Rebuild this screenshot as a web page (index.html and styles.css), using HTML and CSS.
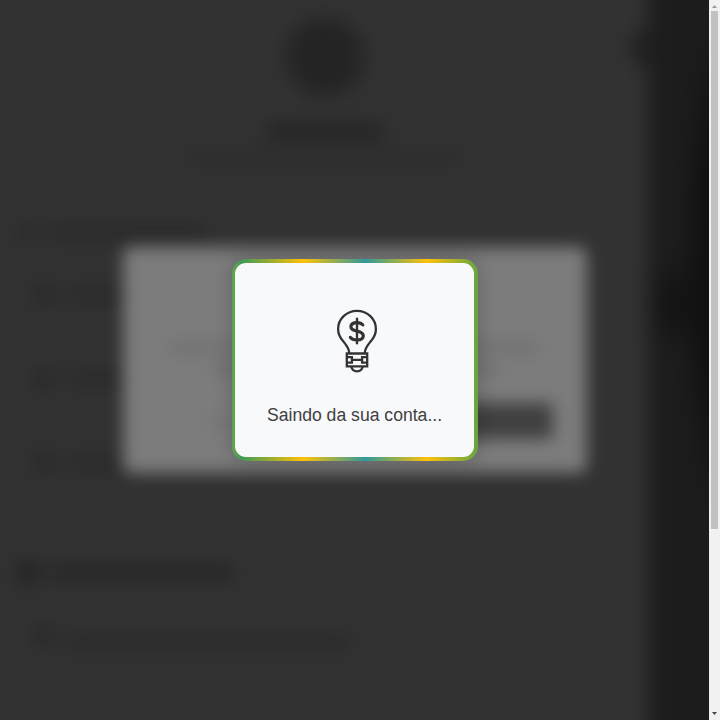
FILE: index.html
```
<!DOCTYPE html>
<html lang="pt-BR">
<head>
<meta charset="utf-8">
<title>Saindo da sua conta</title>
<link rel="stylesheet" href="styles.css">
</head>
<body>
<main class="viewport">
  <div class="backdrop" aria-hidden="true">
    <div class="sheet">
      <i class="avatar"></i>
      <i class="bar name"></i>
      <i class="bar email"></i>
      <i class="divider first"></i>
      <div class="heading"><i class="dot"></i><i class="bar"></i></div>
      <div class="row"><i class="dot"></i><i class="bar"></i></div>
      <div class="row"><i class="dot"></i><i class="bar"></i></div>
      <div class="row"><i class="dot"></i><i class="bar"></i></div>
      <i class="divider second"></i>
      <div class="heading security"><i class="dot"></i><i class="bar"></i></div>
      <div class="row wide"><i class="dot"></i><i class="bar"></i></div>
    </div>
    <div class="side"></div>
    <i class="close"></i>
  </div>
  <div class="dialog" aria-hidden="true">
    <i class="line"></i>
    <i class="line short"></i>
    <div class="actions"><i class="cancel"></i><i class="confirm"></i></div>
  </div>
  <section class="card" role="status">
    <div class="card-body">
      <svg class="bulb" width="42" height="66" viewBox="0 0 42 66" fill="none" stroke="#333" stroke-width="2.3">
        <path d="M13.3 44C13 39 10.3 36 7.2 32.2C3.9 28.4 2.1 25 2.1 20.2A18.9 18.4 0 0 1 39.9 20.2C39.9 25 38.1 28.4 34.8 32.2C31.7 36 29 39 28.7 44"/>
        <path d="M21 9.8V34.2" stroke-width="2.4" stroke-linecap="round"/>
        <path d="M26.8 15.9C25.6 14.3 23.6 13.6 21 13.6C17.1 13.6 14.9 15.2 14.9 17.7C14.9 20.7 17.6 21.3 21 22.1C24.6 22.9 27.3 23.8 27.3 26.8C27.3 29.5 25 31 21 31C17.9 31 15.5 30 14.4 28.4" stroke-width="3.2" stroke-linecap="round"/>
        <path d="M10.8 44.5H31.2V57.4H10.8ZM11 48.2H15.9V53.6H11M31 48.2H26.1V53.6H31M16 50.9H26"/>
        <path d="M15.2 57.6C16 60.9 18 62.4 21 62.4C24 62.4 26 60.9 26.8 57.6"/>
      </svg>
      <p class="message">Saindo da sua conta...</p>
    </div>
  </section>
</main>
<div class="scrollbar" aria-hidden="true"><i class="arrow up"></i><i class="thumb"></i><i class="arrow down"></i></div>
</body>
</html>
```
FILE: styles.css
```
* { box-sizing: border-box; }
body {
  margin: 0;
  display: flex;
  width: 720px;
  height: 720px;
  overflow: hidden;
  background: #1b1b1b;
  font-family: "Liberation Sans", Arial, sans-serif;
}
i { display: block; flex: none; }

.viewport {
  position: relative;
  width: 709px;
  height: 720px;
  overflow: hidden;
  display: flex;
  align-items: center;
  justify-content: center;
}

.backdrop {
  position: absolute;
  inset: -30px;
  display: flex;
  filter: blur(10px);
  background: #323232;
}
.sheet {
  width: 678px;
  padding: 47px 28px 0 30px;
  background: #323232;
}
.side {
  flex: 1;
  background:
    radial-gradient(ellipse 44px 50px at 30px 334px, #121212, transparent),
    radial-gradient(ellipse 36px 260px at 70px 300px, #101010 50%, transparent),
    #1c1c1c;
}
.close {
  position: absolute;
  left: 661px;
  top: 61px;
  width: 34px;
  height: 34px;
  border-radius: 50%;
  background: #1e1e1e;
}
.avatar {
  width: 80px;
  height: 80px;
  margin: 0 0 0 285px;
  border-radius: 50%;
  background: #242424;
}
.bar { border-radius: 4px; background: #292929; }
.name { width: 118px; height: 15px; margin: 27px 0 0 266px; background: #222; }
.email { width: 276px; height: 12px; margin: 12px 0 0 186px; background: #2b2b2b; }
.divider { height: 1px; margin-left: 16px; background: #292929; }
.first { margin-top: 23px; }
.heading { display: flex; gap: 12px; align-items: center; height: 20px; margin: 36px 0 0 18px; }
.heading .dot { width: 16px; height: 18px; background: #282828; }
.heading .bar { width: 160px; height: 12px; background: #262626; }
.row { display: flex; gap: 14px; align-items: center; height: 26px; margin: 39px 0 0 34px; }
.row .dot { width: 20px; height: 20px; border-radius: 50%; background: #242424; }
.row .bar { width: 65px; height: 16px; background: #292929; }
.row + .row { margin-top: 58px; }
.second { margin-top: 44px; }
.security { margin-top: 42px; }
.security .dot { width: 20px; height: 22px; background: #202020; }
.security .bar { width: 184px; height: 14px; background: #232323; }
.row.wide .bar { width: 282px; height: 13px; margin-top: 15px; background: #272727; }

.dialog {
  position: absolute;
  left: 123px;
  top: 247px;
  width: 464px;
  height: 226px;
  padding: 95px 34px 0;
  border-radius: 8px;
  background: #7c7c7c;
  filter: blur(8px);
}
.line { width: 372px; height: 12px; margin: 0 auto 9px; background: #727272; }
.short { width: 290px; }
.actions { display: flex; justify-content: space-between; align-items: center; height: 35px; margin-top: 28px; }
.cancel { width: 60px; height: 10px; margin-left: 46px; background: #767676; }
.confirm { width: 150px; height: 36px; border-radius: 4px; background: #404040; }

.card {
  position: relative;
  width: 246px;
  height: 202px;
  padding: 4px;
  border-radius: 15px;
  background: linear-gradient(90deg, #59a548 0, #58a449 4px, #3c9a58 9px, #ffc107 71px, #2e9a9a 133px, #ffc107 195px, #78a93c 239px, #66a340 246px);
  box-shadow: 0 0 20px rgba(0, 0, 0, .2);
}
.card-body {
  height: 100%;
  margin-left: -1px;
  padding-top: 46px;
  display: flex;
  flex-direction: column;
  align-items: center;
  border-radius: 11px;
  background: #f8f9fb;
}
.bulb { margin-left: 6px; }
.message {
  margin: 29px 0 0 1px;
  font-size: 17.6px;
  line-height: 22px;
  color: #404040;
  white-space: nowrap;
}

.scrollbar {
  width: 11px;
  height: 720px;
  padding: 5px 2px 5px;
  display: flex;
  flex-direction: column;
  align-items: center;
  background: #f1f1f1;
}
.arrow { width: 5px; height: 3px; }
.up { clip-path: polygon(50% 0, 100% 100%, 0 100%); background: #999; }
.down { clip-path: polygon(0 0, 100% 0, 50% 100%); background: #444; margin-top: auto; }
.thumb { width: 7px; height: 518px; margin-top: 3px; background: #c1c1c1; }
```
